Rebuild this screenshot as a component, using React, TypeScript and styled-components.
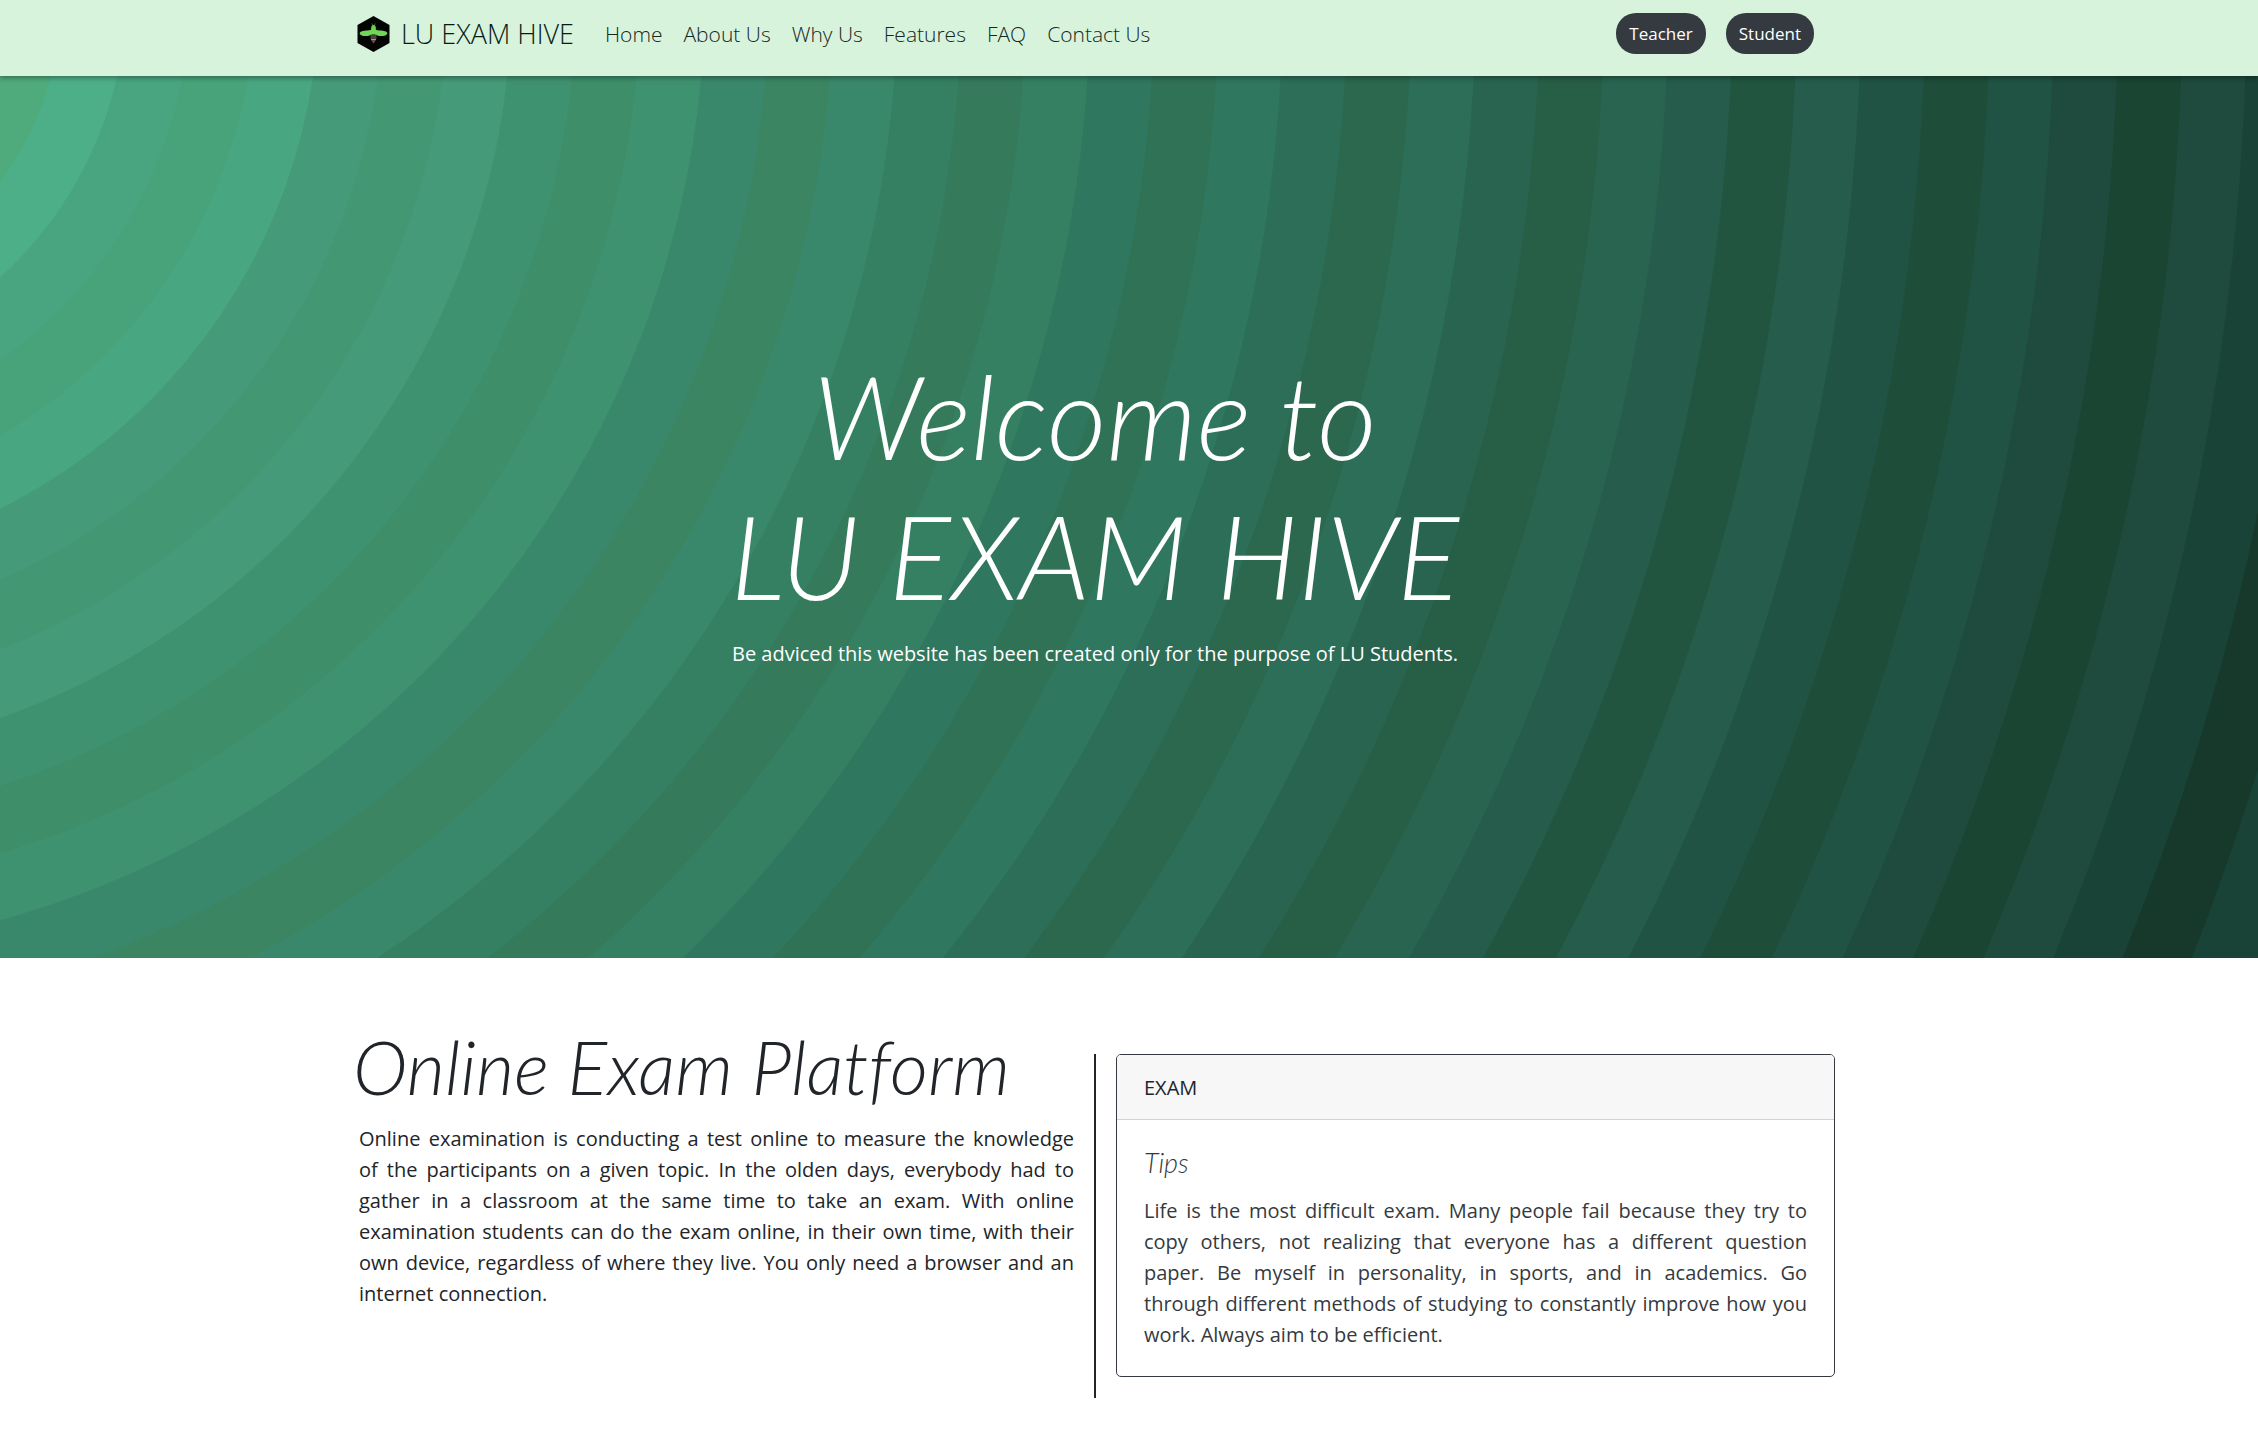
import React from "react";
import styled, { createGlobalStyle } from "styled-components";

const GlobalStyle = createGlobalStyle`
  *, *::before, *::after { box-sizing: border-box; }
  body {
    margin: 0;
    background: #fff;
    color: #212529;
    font-family: "Open Sans", "Noto Sans", sans-serif;
    font-size: 20px;
    line-height: 31px;
  }
  h1, h2, h3, p { margin: 0; }
`;

const NavBar = styled.header`
  position: relative;
  z-index: 1;
  padding: 13px 70px 22px 0;
  background: #d8f3dc;
  box-shadow: 0 2px 5px rgba(0, 0, 0, 0.35);
`;

const NavInner = styled.div`
  display: flex;
  align-items: center;
  max-width: 1482px;
  margin: 0 auto;
  padding: 0 21px 0 4px;
`;

const Brand = styled.a`
  display: flex;
  align-items: center;
  gap: 11px;
  margin-right: 31px;
  color: #081c15;
  font-size: 27px;
  font-weight: 300;
  text-decoration: none;
  white-space: nowrap;
`;

const NavLinks = styled.nav`
  display: flex;
  flex: 1;
  gap: 21px;
  padding-top: 1px;
`;

const NavLink = styled.a`
  color: #16281d;
  font-size: 21px;
  font-weight: 300;
  text-decoration: none;
  white-space: nowrap;
`;

const NavActions = styled.div`
  display: flex;
  gap: 20px;
`;

const PillButton = styled.button`
  height: 41px;
  padding: 0 13px;
  border: 0;
  border-radius: 20px;
  background: #343a40;
  color: #fff;
  font-family: inherit;
  font-size: 17px;
  cursor: pointer;
`;

const HeroSection = styled.section`
  position: relative;
  display: flex;
  flex-direction: column;
  align-items: center;
  justify-content: center;
  min-height: 882px;
  padding: 0 68px 20px 0;
  overflow: hidden;
  color: #fff;
  text-align: center;
`;

const HeroArt = styled.svg`
  position: absolute;
  inset: 0;
  width: 100%;
  height: 100%;
`;

const HeroTitle = styled.h1`
  position: relative;
  margin-bottom: 12px;
  font-family: Lato, sans-serif;
  font-size: 116px;
  font-style: italic;
  font-weight: 300;
  line-height: 140px;
`;

const HeroNote = styled.p`
  position: relative;
`;

const Platform = styled.section`
  padding: 64px 70px 43px 0;
`;

const Columns = styled.div`
  display: grid;
  grid-template-columns: 1fr 1fr;
  align-items: start;
  max-width: 1482px;
  margin: 0 auto;
`;

const Intro = styled.article`
  padding-right: 20px;
`;

const IntroTitle = styled.h2`
  margin-bottom: 12px;
  font-family: Lato, sans-serif;
  font-size: 74px;
  font-style: italic;
  font-variant-ligatures: none;
  font-weight: 300;
  line-height: 89px;
  white-space: nowrap;
`;

const IntroBody = styled.div`
  padding-left: 6px;
`;

const BodyText = styled.p<{ $color?: string }>`
  color: ${({ $color }) => $color ?? "#212529"};
  text-align: justify;
`;

const TipColumn = styled.div`
  margin-top: 32px;
  padding: 0 0 21px 20px;
  border-left: 2px solid #212529;
`;

const Card = styled.article`
  overflow: hidden;
  border: 1px solid #343a40;
  border-radius: 5px;
`;

const CardHeader = styled.header`
  padding: 17px 27px 16px;
  border-bottom: 1px solid #d3d3d3;
  background: #f7f7f7;
`;

const CardBody = styled.div`
  padding: 27px 27px 26px;
`;

const CardTitle = styled.h3`
  margin-bottom: 16px;
  color: #343a40;
  font-family: Lato, sans-serif;
  font-size: 27px;
  font-style: italic;
  font-weight: 300;
  line-height: 32px;
`;

/* Ring fills from the innermost circle to the outermost one. */
const RING_STEP = 64.25;
const FIRST_RING = 5;
const RING_COLORS = [
  "#4faa7c", "#4daf87",
  "#48a580", "#48a37a", "#48a680",
  "#459a79", "#439873", "#459a79",
  "#3f9270", "#3d8e69", "#3f9270",
  "#3a886b", "#3b8562", "#3a886b",
  "#358063", "#347a5b", "#358063",
  "#30775f", "#307256", "#30775f",
  "#2c6e58", "#2b684e", "#2c6e58",
  "#286450", "#275e46", "#286450",
  "#255c4c", "#215540", "#255c4c",
  "#205344", "#1e4d39", "#205344",
  "#1f4a3e", "#1a4533", "#1f4a3e",
  "#194336", "#17392b", "#194336",
];

const Rings = () => (
  <HeroArt viewBox="0 0 2258 882" preserveAspectRatio="xMidYMid slice" aria-hidden="true">
    <rect width="2258" height="882" fill="#194336" />
    {RING_COLORS.map((color, i) => (
      <circle key={i} cx={-259} cy={-84} r={(FIRST_RING + i) * RING_STEP} fill={color} />
    )).reverse()}
  </HeroArt>
);

const BeeLogo = () => (
  <svg width="33" height="36" viewBox="0 0 33 36" aria-hidden="true">
    <path d="M16.500 0 L32.500 9 V27 L16.500 36 L0.500 27 V9 Z" fill="#020402" />
    <path d="M14.800 7.500 L16 10 M18.200 7.500 L17 10" stroke="#3f8f35" strokeWidth="0.8" />
    <ellipse cx="16.500" cy="12.500" rx="2.400" ry="3.600" fill="#6bd050" />
    <path
      d="M16.500 12.500 C18.500 13.500 19.500 14.500 23 14.600 C27 14.700 30 15.600 30.400 17.200 C30 20 24 20.800 20.500 19.500 C18.500 18.800 18 18.500 16.500 18.500 C15 18.500 14.500 18.800 12.500 19.500 C9 20.800 3 20 2.600 17.200 C3 15.600 6 14.700 10 14.600 C13.500 14.500 14.500 13.500 16.500 12.500 Z"
      fill="#70d655"
    />
    <path d="M13.500 18.800 H19.500 V23 H13.500 Z" fill="#4a4440" />
    <path d="M13.800 23 H19.200 L18.500 24.500 H14.500 Z" fill="#c08d86" />
    <path d="M14.500 24.800 H18.500 L16.500 27.500 Z" fill="#a43a35" />
  </svg>
);

const LINKS = ["Home", "About Us", "Why Us", "Features", "FAQ", "Contact Us"];

export default function App() {
  return (
    <>
      <GlobalStyle />
      <NavBar>
        <NavInner>
          <Brand href="#home">
            <BeeLogo />
            LU EXAM HIVE
          </Brand>
          <NavLinks aria-label="Main">
            {LINKS.map((label) => (
              <NavLink key={label} href={`#${label.toLowerCase().replace(" ", "-")}`}>
                {label}
              </NavLink>
            ))}
          </NavLinks>
          <NavActions>
            <PillButton type="button">Teacher</PillButton>
            <PillButton type="button">Student</PillButton>
          </NavActions>
        </NavInner>
      </NavBar>
      <main>
        <HeroSection id="home">
          <Rings />
          <HeroTitle>
            Welcome to
            <br />
            LU EXAM HIVE
          </HeroTitle>
          <HeroNote>
            Be adviced this website has been created only for the purpose of LU Students.
          </HeroNote>
        </HeroSection>
        <Platform id="about-us">
          <Columns>
            <Intro>
              <IntroTitle>Online Exam Platform</IntroTitle>
              <IntroBody>
                <BodyText>
                  Online examination is conducting a test online to measure the knowledge
                  of&nbsp;the participants on a given topic. In the olden days, everybody had to
                  gather in a classroom at the same time to take an exam. With online examination
                  students can do the exam online, in their own time, with their own device,
                  regardless of where they live. You only need a browser and an internet connection.
                </BodyText>
              </IntroBody>
            </Intro>
            <TipColumn>
              <Card>
                <CardHeader>EXAM</CardHeader>
                <CardBody>
                  <CardTitle>Tips</CardTitle>
                  <BodyText $color="#343a40">
                    Life is the most difficult exam. Many people fail because they try to copy
                    others, not realizing that everyone has a different question paper.&nbsp;Be
                    myself in personality, in sports, and in academics. Go through different methods
                    of studying to constantly improve how you work. Always aim to be efficient.
                  </BodyText>
                </CardBody>
              </Card>
            </TipColumn>
          </Columns>
        </Platform>
      </main>
    </>
  );
}
